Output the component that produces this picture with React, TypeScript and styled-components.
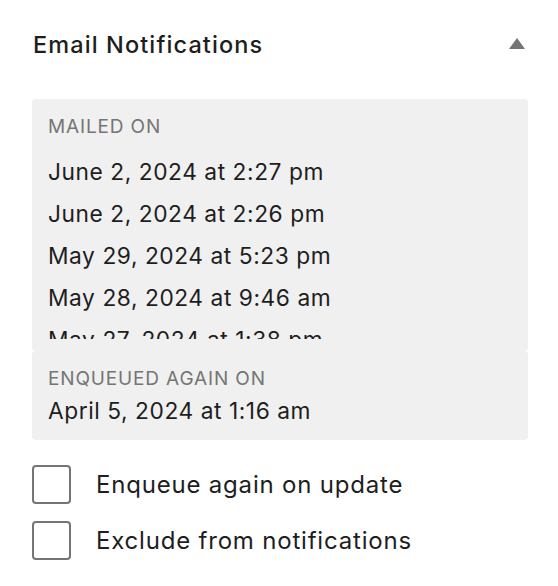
import React from "react";
import styled, { createGlobalStyle } from "styled-components";

const Global = createGlobalStyle`
  html, body { margin: 0; padding: 0; background: #ffffff; }
  body { font-family: Inter, "Noto Sans", "Liberation Sans", sans-serif; color: #1e1e1e; }
`;

const Panel = styled.section`
  width: 558px;
  box-sizing: border-box;
  padding: 0 30px 0 32px;
`;

const Header = styled.div`
  height: 88px;
  display: flex;
  align-items: center;
  justify-content: space-between;
`;

const Title = styled.h2`
  margin: 0;
  padding-left: 1px;
  font-size: 23.5px;
  font-weight: 500;
  color: #1e1e1e;
  letter-spacing: 1.1px;
`;

const Toggle = styled.button`
  border: 0;
  background: none;
  padding: 0;
  margin-right: 3px;
  width: 16px;
  height: 12px;
  display: flex;
  cursor: pointer;
`;

const Body = styled.div`
  padding-top: 11px;
  display: flex;
  flex-direction: column;
`;

const InfoBox = styled.div<{ $bottom: number }>`
  background: #f0f0f0;
  border-radius: 4px;
  padding: 16px 16px ${(p) => p.$bottom}px;
`;

const Label = styled.div`
  font-size: 19px;
  line-height: 24px;
  text-transform: uppercase;
  color: #757575;
  font-weight: 400;
  letter-spacing: 0.85px;
`;

const List = styled.ul<{ $max?: number; $top: number }>`
  list-style: none;
  margin: ${(p) => p.$top}px 0 0;
  padding: 0;
  overflow: hidden;
  ${(p) => (p.$max ? `max-height: ${p.$max}px;` : "")}
`;

const Item = styled.li<{ $h: number }>`
  font-size: 22.75px;
  line-height: ${(p) => p.$h}px;
  color: #1e1e1e;
  letter-spacing: 0.55px;
`;

const Checks = styled.div`
  margin-top: 25px;
  display: flex;
  flex-direction: column;
  gap: 17px;
`;

const CheckRow = styled.label`
  display: flex;
  align-items: center;
  gap: 25px;
  cursor: pointer;
`;

const Box = styled.span`
  width: 39px;
  height: 39px;
  box-sizing: border-box;
  border: 2px solid #757575;
  border-radius: 4px;
  background: #fff;
  flex-shrink: 0;
`;

const CheckText = styled.span`
  font-size: 24px;
  line-height: 30px;
  color: #1e1e1e;
  letter-spacing: 0.8px;
`;

const mailed = [
  "June 2, 2024 at 2:27 pm",
  "June 2, 2024 at 2:26 pm",
  "May 29, 2024 at 5:23 pm",
  "May 28, 2024 at 9:46 am",
  "May 27, 2024 at 1:38 pm",
  "May 26, 2024 at 11:02 am",
];

export default function App() {
  return (
    <>
      <Global />
      <Panel>
        <Header>
          <Title>Email Notifications</Title>
          <Toggle aria-label="Collapse">
            <svg width="16" height="12" viewBox="0 0 16 12">
              <polygon points="8,0 16,11 0,11" fill="#757575" />
            </svg>
          </Toggle>
        </Header>
        <Body>
          <InfoBox $bottom={12}>
            <Label>Mailed on</Label>
            <List $top={12} $max={188}>
              {mailed.map((m) => (
                <Item key={m} $h={42}>
                  {m}
                </Item>
              ))}
            </List>
          </InfoBox>
          <InfoBox $bottom={9}>
            <Label>Enqueued again on</Label>
            <List $top={0}>
              <Item $h={40}>April 5, 2024 at 1:16 am</Item>
            </List>
          </InfoBox>
          <Checks>
            <CheckRow>
              <Box />
              <CheckText>Enqueue again on update</CheckText>
            </CheckRow>
            <CheckRow>
              <Box />
              <CheckText>Exclude from notifications</CheckText>
            </CheckRow>
          </Checks>
        </Body>
      </Panel>
    </>
  );
}
